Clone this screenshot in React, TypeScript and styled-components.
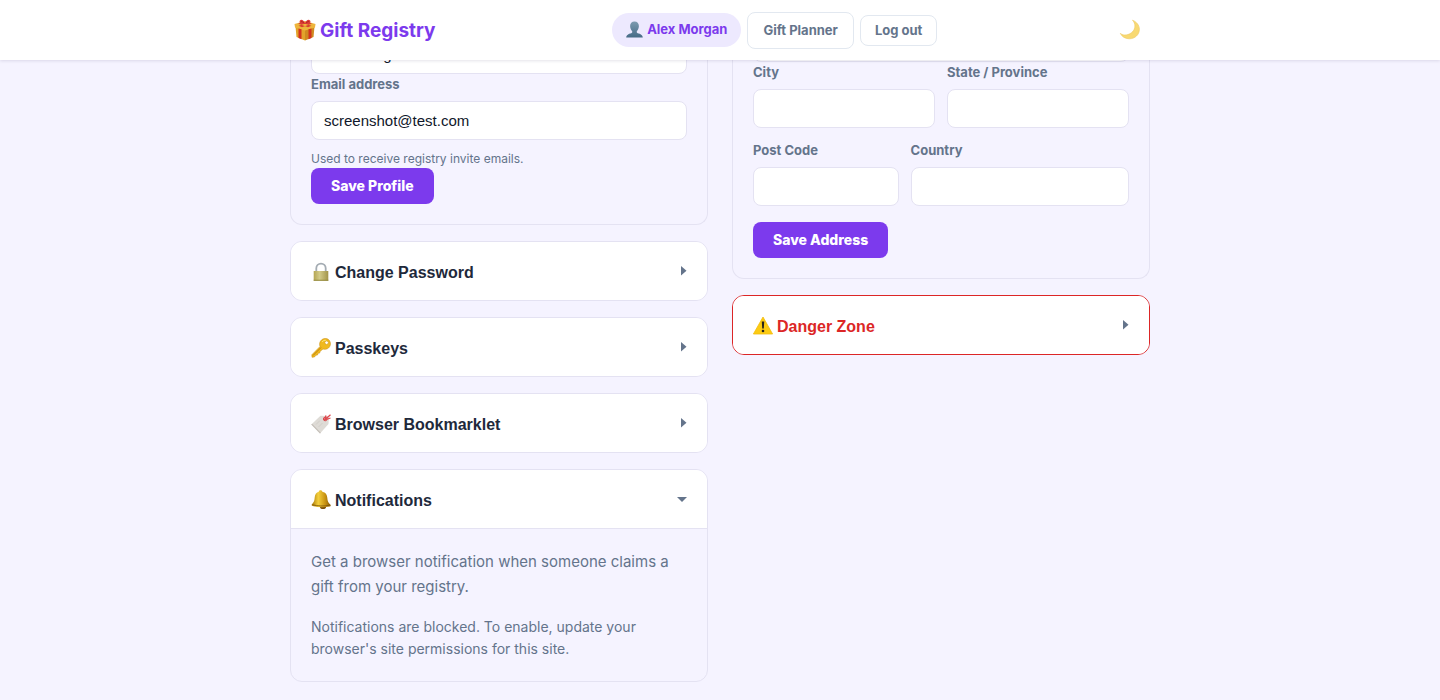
import React from "react";
import styled, { createGlobalStyle, css } from "styled-components";

const color = {
  page: "#f5f3ff",
  surface: "#ffffff",
  border: "#e4e2f2",
  accent: "#7c3aed",
  accentSoft: "#ede9fe",
  text: "#1e293b",
  muted: "#64748b",
  danger: "#dc2626",
};

const sans = `Inter, "Liberation Sans", sans-serif`;
const arial = `"Liberation Sans", Arial, sans-serif`;

const GlobalStyle = createGlobalStyle`
  *, *::before, *::after { box-sizing: border-box; }
  body {
    margin: 0;
    background: ${color.page};
    color: ${color.text};
    font-family: ${sans};
    font-size: 15px;
    line-height: 25px;
  }
  p { margin: 0; }
`;

const Header = styled.header`
  position: sticky;
  top: 0;
  z-index: 10;
  background: ${color.surface};
  box-shadow: 0 1px 3px rgba(30, 27, 75, 0.12);
`;

const HeaderInner = styled.div`
  display: flex;
  align-items: center;
  justify-content: space-between;
  max-width: 900px;
  height: 60px;
  margin: 0 auto;
  padding: 0 20px;
`;

const Brand = styled.a`
  display: flex;
  align-items: center;
  gap: 4px;
  padding: 0 4px;
  color: ${color.accent};
  font-size: 19px;
  font-weight: 700;
  text-decoration: none;
`;

const Nav = styled.nav`
  display: flex;
  align-items: center;
  gap: 6px;
`;

const UserLink = styled.a`
  display: flex;
  align-items: center;
  gap: 4px;
  height: 34px;
  padding: 0 14px 2px;
  border-radius: 17px;
  background: ${color.accentSoft};
  color: ${color.accent};
  font-size: 13px;
  font-weight: 700;
  text-decoration: none;
`;

const outlined = css`
  display: flex;
  align-items: center;
  border: 1px solid #e2e8f0;
  border-radius: 8px;
  background: ${color.surface};
  color: ${color.muted};
  font-family: ${sans};
  font-size: 13px;
  font-weight: 700;
`;

const NavLink = styled.a`
  ${outlined}
  height: 37px;
  padding: 0 15px;
  text-decoration: none;
`;

const NavButton = styled.button`
  ${outlined}
  height: 31px;
  padding: 0 14px;
`;

const ThemeButton = styled.button`
  display: flex;
  padding: 8px 9px;
  border: 0;
  background: none;
`;

const Main = styled.main`
  display: grid;
  grid-template-columns: 1fr 1fr;
  align-items: start;
  gap: 24px;
  max-width: 900px;
  margin: 0 auto;
  padding: 0 20px;
  @media (max-width: 640px) {
    grid-template-columns: 1fr;
  }
`;

const Column = styled.div<{ $scrolled: number }>`
  display: flex;
  flex-direction: column;
  gap: 16px;
  min-width: 0;
  margin-top: -${(p) => p.$scrolled}px;
`;

const FormCard = styled.form`
  padding: 0 20px 20px;
  border: 1px solid ${color.border};
  border-top: 0;
  border-radius: 0 0 12px 12px;
`;

const Row = styled.div<{ $columns: string }>`
  display: grid;
  grid-template-columns: ${(p) => p.$columns};
  gap: 12px;
  & + & {
    margin-top: 12px;
  }
`;

const Label = styled.label`
  display: block;
  margin-bottom: 6px;
  color: ${color.muted};
  font-size: 13px;
  font-weight: 700;
  line-height: 21px;
`;

const Input = styled.input`
  display: block;
  width: 100%;
  height: 39px;
  padding: 0 12px;
  border: 1px solid ${color.border};
  border-radius: 8px;
  background: ${color.surface};
  color: #0f172a;
  font-family: ${arial};
  font-size: 15px;
`;

const Hint = styled.p`
  margin-top: 9px;
  color: ${color.muted};
  font-size: 12px;
  line-height: 19px;
`;

const SaveButton = styled.button<{ $spaced?: boolean }>`
  display: block;
  height: 36px;
  margin-top: ${(p) => (p.$spaced ? 16 : 0)}px;
  padding: 0 20px 2px;
  border: 0;
  border-radius: 8px;
  background: ${color.accent};
  color: #fff;
  font-family: ${sans};
  font-size: 14px;
  font-weight: 800;
`;

const Panel = styled.details<{ $danger?: boolean }>`
  overflow: hidden;
  border: 1px solid ${(p) => (p.$danger ? color.danger : color.border)};
  border-radius: 12px;
`;

const Summary = styled.summary<{ $danger?: boolean }>`
  display: flex;
  align-items: center;
  gap: 4px;
  height: 58px;
  padding: 2px 20px 0;
  background: ${color.surface};
  color: ${(p) => (p.$danger ? color.danger : color.text)};
  font-family: ${arial};
  font-size: 16px;
  font-weight: 700;
  list-style: none;
  cursor: pointer;
  &::-webkit-details-marker {
    display: none;
  }
`;

const Title = styled.span`
  flex: 1;
  padding-top: 1px;
`;

const IconBox = styled.svg`
  display: block;
  flex: none;
`;

const PanelBody = styled.div`
  display: grid;
  gap: 17px;
  padding: 20px 20px 21px;
  border-top: 1px solid ${color.border};
  color: ${color.muted};
`;

const Small = styled.p`
  font-size: 14px;
  line-height: 22px;
`;

const GiftIcon = () => (
  <IconBox width="22" height="22" viewBox="0 0 22 22" aria-hidden="true">
    <path d="M1.500 7.500 11 10v11.500L2.500 18Z" fill="#e2a32a" />
    <path d="M20.500 7.500 11 10v11.500l8.500-3.500Z" fill="#d08a20" />
    <path d="M.5 5 11 2l10.500 3-.5 3.500L11 11.500 1 8.500Z" fill="#edb53c" />
    <path d="m4.500 9.500 3 .8v10l-3-1.300ZM17.500 9.500l-3 .8v10l3-1.300Z" fill="#d2321f" />
    <path d="m4 4.500 3-.9 10.500 3.200-3.500 1.400ZM18 4.500l-3-.9L4.500 6.800 8 8.200Z" fill="#d84030" />
    <path d="M11 5C7 5.500 4.500 3.500 6 1.500S10 2 11 4c1-2 3.500-4.500 5-2.500S15 5.500 11 5Z" fill="#dc3a36" />
    <path d="M7 2.500c1 0 2 .5 3 1.500M15 2.500c-1 0-2 .5-3 1.500" fill="none" stroke="#9f2220" strokeWidth=".8" />
  </IconBox>
);

const UserIcon = () => (
  <IconBox width="17" height="17" viewBox="0 0 17 17" aria-hidden="true">
    <defs>
      <linearGradient id="bust" x1="0" y1="0" x2="0" y2="1">
        <stop offset="0" stopColor="#7d9bb0" />
        <stop offset="1" stopColor="#456a85" />
      </linearGradient>
    </defs>
    <path
      d="M8.500.5c2.700 0 4.400 1.800 4.400 4.500 0 2.200-1 4.200-2.100 5.200v1.400c0 1 6 .9 6 5H.2c0-4.100 6-4 6-5v-1.400c-1.100-1-2.100-3-2.100-5.200C4.100 2.300 5.800.5 8.500.5Z"
      fill="url(#bust)"
    />
  </IconBox>
);

const MoonIcon = () => (
  <IconBox width="22" height="22" viewBox="0 0 22 22" aria-hidden="true">
    <path
      d="M13.500 1.200c4 1.500 6.900 5 6.900 9.100 0 5.400-4.500 9.500-10 9.500-4.100 0-7.400-2-9.100-5.400 1.900 1.300 3.700 1.800 5.900 1.500 5-.6 8.700-4.500 8.700-8.900 0-2.300-.8-4-2.400-5.800Z"
      fill="#f8d972"
      stroke="#edc75e"
      strokeWidth=".6"
    />
  </IconBox>
);

const LockIcon = () => (
  <IconBox width="20" height="20" viewBox="0 0 20 20" aria-hidden="true">
    <defs>
      <linearGradient id="lockBody" x1="0" y1="0" x2="1" y2="0">
        <stop offset="0" stopColor="#b5a653" />
        <stop offset=".4" stopColor="#d2ca88" />
        <stop offset="1" stopColor="#a2944a" />
      </linearGradient>
    </defs>
    <path d="M5.300 10V6.300a4.700 4.700 0 0 1 9.400 0V10" fill="none" stroke="#a4acb3" strokeWidth="1.800" />
    <path d="M2.700 9h14.600v9.800H2.700Z" fill="url(#lockBody)" />
    <path d="M2.700 17.800h14.600v1H2.700Z" fill="#958a3e" />
  </IconBox>
);

const KeyIcon = () => (
  <IconBox width="20" height="20" viewBox="0 0 20 20" aria-hidden="true">
    <path
      fillRule="evenodd"
      d="M10 2.500c2-2.500 6-2.600 8-.5s2 6-.5 8c-1.700 1.400-3.700 1.700-5.500 1L9 13.500l-.3 1.600-1.800.2-.3 1.700-1.800.2L3.500 19 1 19.300.8 16.800 9 8.500c-.8-2-.5-4.300 1-6Zm4.500.9a1.700 1.700 0 1 0 2.400 2.400 1.700 1.700 0 0 0-2.400-2.400Z"
      fill="#f0b91f"
      stroke="#c78a10"
      strokeWidth=".5"
    />
    <path d="M2 17.500 10 9.500" stroke="#a86f0c" strokeWidth=".8" />
    <path d="M11 4c1-1.600 2.800-2 4.300-1.600" fill="none" stroke="#fbe372" strokeWidth="1" />
  </IconBox>
);

const TagIcon = () => (
  <IconBox width="20" height="20" viewBox="0 0 20 20" aria-hidden="true">
    <path d="M.3 10.500 9.500 1.800l7 .2 1.300 1.800-.3 6.200L9 19.500Z" fill="#dedbd6" />
    <path d="m.3 10.500.8-.8 8.700 9-.8.8Z" fill="#c4bfb8" />
    <path d="m5 10.500 4-4M7.500 13l4-4" stroke="#cbc7c1" strokeWidth=".7" />
    <circle cx="14.200" cy="5" r="1.800" fill="#f3e4e2" stroke="#d5474b" strokeWidth="1" />
    <path d="M13.500 6 19.500.8M14 6l5.500-2M13.500 6l1.500-4.500" fill="none" stroke="#df4a50" strokeWidth="1.300" />
  </IconBox>
);

const BellIcon = () => (
  <IconBox width="20" height="20" viewBox="0 0 20 20" aria-hidden="true">
    <defs>
      <linearGradient id="brass" x1="0" y1="0" x2="1" y2="0">
        <stop offset="0" stopColor="#a77708" />
        <stop offset=".35" stopColor="#f4cf3c" />
        <stop offset=".7" stopColor="#c99412" />
        <stop offset="1" stopColor="#8a5c06" />
      </linearGradient>
    </defs>
    <ellipse cx="12" cy="17.300" rx="3" ry="1.800" fill="#7a4f08" />
    <path
      d="M9.500.3c1 0 1.700.6 1.800 1.400 3.400.6 4.800 3 5 6 .2 3.500 1 5 3 6.800.8.800.5 1.800-.7 2-5.500 1.200-11.500 1-17-.5-1.200-.4-1.300-1.300-.4-2C3 12 3.500 10.500 3.700 7.500c.2-3.200 1.500-5.200 4.100-5.800 0-.8.7-1.400 1.700-1.400Z"
      fill="url(#brass)"
    />
    <path d="M1.500 14.800c5.300 1.400 11.500 1.600 17 .4" fill="none" stroke="#7a5206" strokeWidth=".8" />
  </IconBox>
);

const WarningIcon = () => (
  <IconBox width="20" height="20" viewBox="0 0 20 20" aria-hidden="true">
    <path d="M10 1 19.600 18H.4Z" fill="#fccb12" stroke="#f3bd0c" strokeWidth=".8" strokeLinejoin="round" />
    <path d="M8.800 5.500h2.400l-.4 7H9.200Z" fill="#27231a" />
    <circle cx="10" cy="15" r="1.300" fill="#27231a" />
  </IconBox>
);

const Caret = ({ open }: { open?: boolean }) => (
  <IconBox width="10" height="12" viewBox="0 0 10 12" aria-hidden="true">
    <path d={open ? "M0 3h10L5 8Z" : "M4 0v9.500l5.500-4.750Z"} fill={color.muted} />
  </IconBox>
);

type PanelProps = {
  icon: React.ReactNode;
  title: string;
  open?: boolean;
  danger?: boolean;
  children?: React.ReactNode;
};

const SettingsPanel = ({ icon, title, open, danger, children }: PanelProps) => (
  <Panel open={open} $danger={danger}>
    <Summary $danger={danger}>
      {icon}
      <Title>{title}</Title>
      <Caret open={open} />
    </Summary>
    {children && <PanelBody>{children}</PanelBody>}
  </Panel>
);

const Field = ({ id, label, value }: { id: string; label: string; value?: string }) => (
  <div>
    <Label htmlFor={id}>{label}</Label>
    <Input id={id} defaultValue={value} />
  </div>
);

export default function App() {
  return (
    <>
      <GlobalStyle />
      <Header>
        <HeaderInner>
          <Brand href="#home">
            <GiftIcon />
            Gift Registry
          </Brand>
          <Nav>
            <UserLink href="#profile">
              <UserIcon />
              Alex Morgan
            </UserLink>
            <NavLink href="#planner">Gift Planner</NavLink>
            <NavButton type="button">Log out</NavButton>
          </Nav>
          <ThemeButton type="button" aria-label="Toggle dark mode">
            <MoonIcon />
          </ThemeButton>
        </HeaderInner>
      </Header>
      <Main>
        <Column $scrolled={25}>
          <FormCard>
            <Input aria-label="Name" defaultValue="Alex Morgan" />
            <Field id="email" label="Email address" value="screenshot@test.com" />
            <Hint>Used to receive registry invite emails.</Hint>
            <SaveButton type="button">Save Profile</SaveButton>
          </FormCard>
          <SettingsPanel icon={<LockIcon />} title="Change Password" />
          <SettingsPanel icon={<KeyIcon />} title="Passkeys" />
          <SettingsPanel icon={<TagIcon />} title="Browser Bookmarklet" />
          <SettingsPanel icon={<BellIcon />} title="Notifications" open>
            <p>Get a browser notification when someone claims a gift from your registry.</p>
            <Small>
              Notifications are blocked. To enable, update your browser's site permissions for this site.
            </Small>
          </SettingsPanel>
        </Column>
        <Column $scrolled={37}>
          <FormCard>
            <Input aria-label="Street address" />
            <Row $columns="1fr 1fr">
              <Field id="city" label="City" />
              <Field id="state" label="State / Province" />
            </Row>
            <Row $columns="2fr 3fr">
              <Field id="postcode" label="Post Code" />
              <Field id="country" label="Country" />
            </Row>
            <SaveButton type="button" $spaced>
              Save Address
            </SaveButton>
          </FormCard>
          <SettingsPanel icon={<WarningIcon />} title="Danger Zone" danger />
        </Column>
      </Main>
    </>
  );
}
